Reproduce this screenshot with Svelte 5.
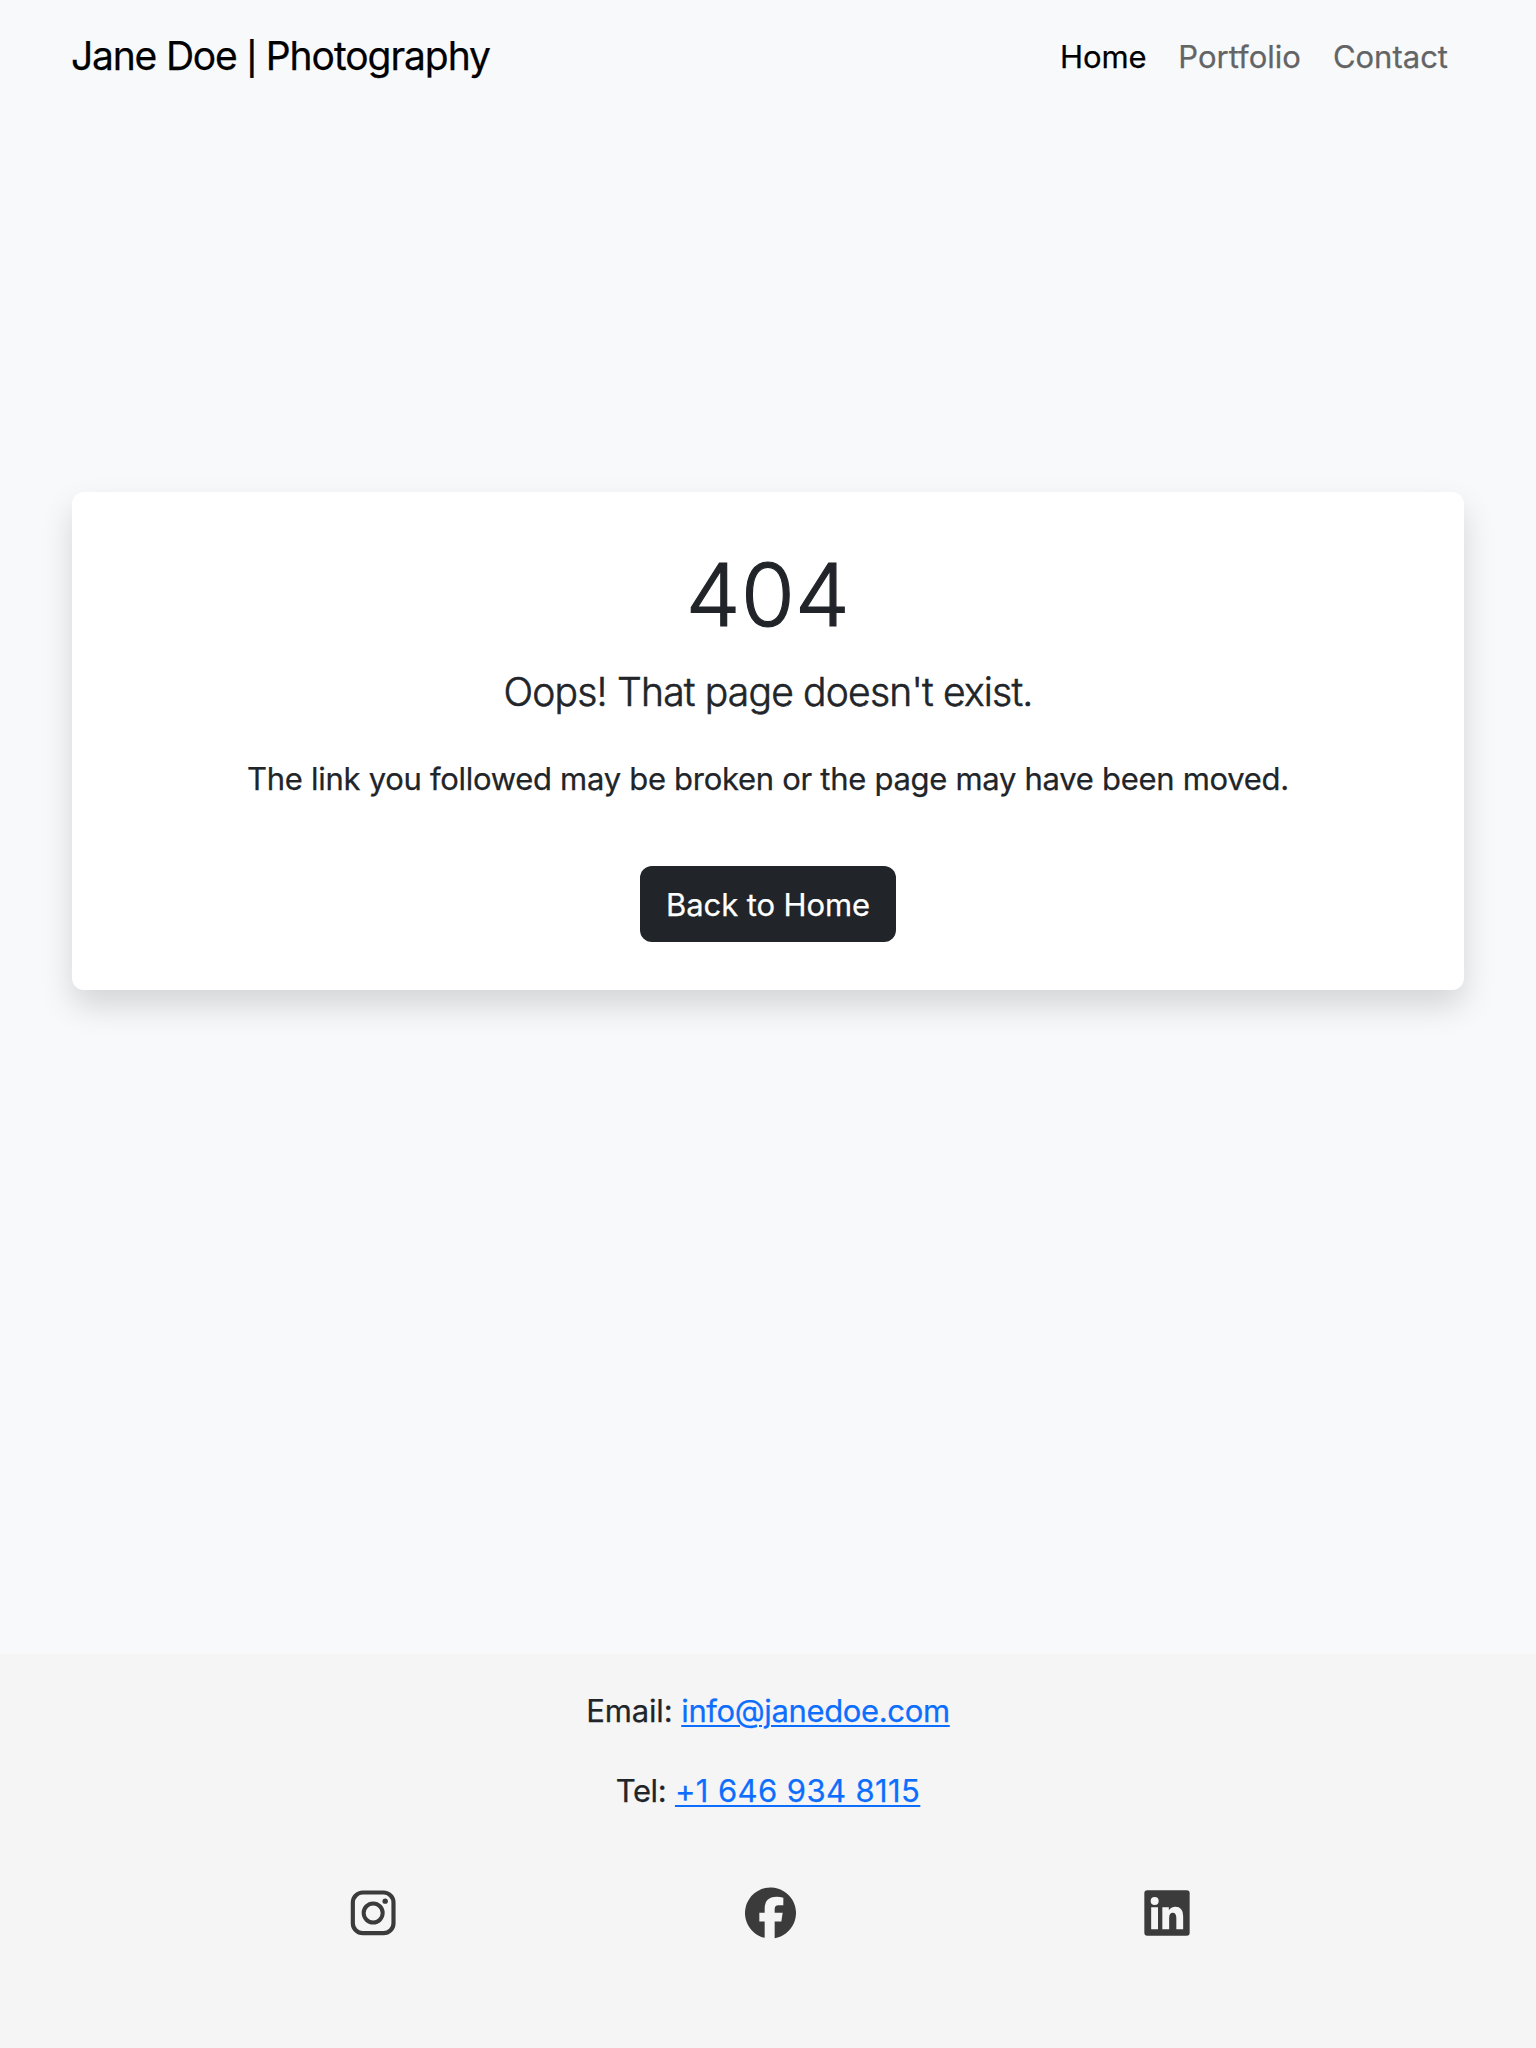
<script>
  const links = [
    { label: 'Home', active: true },
    { label: 'Portfolio', active: false },
    { label: 'Contact', active: false }
  ];
</script>

<div class="page">
  <nav class="navbar">
    <a class="brand" href="#home">Jane Doe <span class="divider">|</span> <span class="trade">Photography</span></a>
    <ul class="links">
      {#each links as link}
        <li><a class="link" class:active={link.active} href="#{link.label}">{link.label}</a></li>
      {/each}
    </ul>
  </nav>

  <main class="content">
    <section class="card">
      <h1 class="code">404</h1>
      <p class="lead">Oops! That page doesn't exist.</p>
      <p class="detail">The link you followed may be broken or the page may have been moved.</p>
      <a class="button" href="#home">Back to Home</a>
    </section>
  </main>

  <footer class="footer">
    <p class="row"><span class="mail-label">Email:</span> <a class="mail" href="mailto:info@janedoe.com">info@janedoe.com</a></p>
    <p class="row"><span class="tel-label">Tel:</span> <a class="tel" href="tel:+16469348115">+1 646 934 8115</a></p>
    <div class="social">
      <a href="#instagram" aria-label="Instagram">
        <svg viewBox="10 38 180 180" fill="none" stroke="#3b3b3b">
          <rect x="39.5" y="66.5" width="122" height="122" rx="30" stroke-width="12.5" />
          <circle cx="100.5" cy="128" r="28.5" stroke-width="12" />
          <circle cx="136.5" cy="92.5" r="8" fill="#3b3b3b" stroke="none" />
        </svg>
      </a>
      <a href="#facebook" aria-label="Facebook">
        <svg viewBox="29 38 180 180" fill="#3b3b3b">
          <path d="M103 202.500A76.500 76.500 0 1 1 133 203.500V153.500H153L157 127.500H133V116Q133 104.500 144 104.500H159V82Q149 79.500 139 79.500Q103 79.500 103 115V127.500H87V153.500H103Z" />
        </svg>
      </a>
      <a href="#linkedin" aria-label="LinkedIn">
        <svg viewBox="21 38 180 180">
          <rect x="43" y="60" width="136" height="136" rx="9" fill="#3b3b3b" />
          <circle cx="74" cy="92" r="12" fill="#f5f5f5" />
          <path d="M63.500 111H84V177H63.500ZM97 111H116.500V120Q123 109.500 136 109.500Q159.500 109.500 159.500 138V177H139V144Q139 127 128.500 127Q117.500 127 117.500 143V177H97Z" fill="#f5f5f5" />
        </svg>
      </a>
    </div>
  </footer>
</div>

<style>
  :global(body) {
    background: #f8f9fb;
  }

  .page {
    display: flex;
    flex-direction: column;
    min-height: 2048px;
    color: #212529;
    font-family: Inter, 'Liberation Sans', sans-serif;
    font-size: 31px;
    line-height: 48px;
    -webkit-text-stroke: 0.25px currentColor;
  }

  p, h1, ul {
    margin: 0;
    padding: 0;
  }

  .navbar {
    display: flex;
    align-items: center;
    justify-content: space-between;
    height: 112px;
    padding: 0 88px 0 71px;
    box-sizing: border-box;
  }

  .brand {
    color: #000;
    font-size: 39px;
    letter-spacing: -1.2px;
    text-decoration: none;
  }

  .divider {
    font-size: 32.5px;
    font-weight: 500;
    line-height: 1;
    letter-spacing: -1.6px;
  }

  .trade {
    letter-spacing: -1.07px;
  }

  .links {
    display: flex;
    gap: 32px;
    padding-top: 1px;
    list-style: none;
  }

  .link {
    color: #636465;
    text-decoration: none;
  }

  .link.active {
    color: #000;
    letter-spacing: -0.15px;
  }

  .content {
    flex: 1;
    padding: 380px 72px 0;
  }

  .card {
    display: flex;
    flex-direction: column;
    align-items: center;
    padding: 49px 48px 48px;
    border-radius: 12px;
    background: #fff;
    box-shadow: 0 16px 32px rgba(0, 2, 0, 0.145);
    text-align: center;
  }

  .code {
    margin-bottom: 19px;
    font-size: 87px;
    font-weight: 300;
    line-height: 108px;
    letter-spacing: 0.4px;
    -webkit-text-stroke-width: 1.2px;
  }

  .lead {
    margin-bottom: 39px;
    font-size: 39px;
    font-weight: 300;
    letter-spacing: -0.8px;
    -webkit-text-stroke-width: 0.6px;
  }

  .detail {
    margin-bottom: 63px;
    letter-spacing: -0.29px;
  }

  .button {
    box-sizing: border-box;
    width: 256px;
    height: 76px;
    border-radius: 12px;
    background: #212529;
    color: #fff;
    line-height: 78px;
    letter-spacing: -0.1px;
    text-decoration: none;
  }

  .footer {
    box-sizing: border-box;
    height: 394px;
    padding-top: 33px;
    background: #f5f5f5;
    text-align: center;
  }

  .row {
    margin-bottom: 32px;
  }

  .row a {
    color: #0d6efd;
    text-decoration: underline;
    text-decoration-thickness: 2px;
    text-underline-offset: 3px;
  }

  .mail-label {
    letter-spacing: -0.15px;
  }

  .mail {
    letter-spacing: -0.36px;
  }

  .tel-label {
    letter-spacing: -0.4px;
  }

  .tel {
    letter-spacing: 0.4px;
  }

  .social {
    display: grid;
    grid-template-columns: repeat(3, 397px);
    margin: 68px 0 0 174px;
  }

  .social a {
    display: flex;
    justify-content: center;
  }

  .social svg {
    width: 60px;
    height: 60px;
  }
</style>
